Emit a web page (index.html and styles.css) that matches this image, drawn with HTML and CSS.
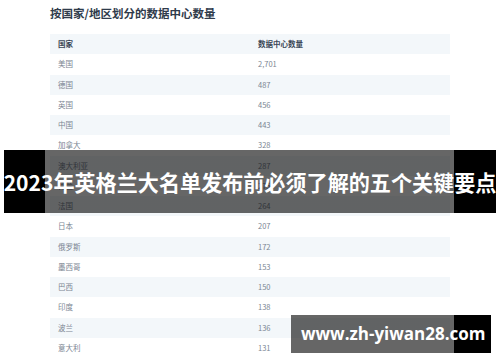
FILE: index.html
```html
<!DOCTYPE html>
<html lang="zh-CN">
<head>
<meta charset="utf-8">
<title>按国家/地区划分的数据中心数量</title>
<link rel="stylesheet" href="styles.css">
</head>
<body>
<main class="page">
  <h1 class="title">按国家/地区划分的数据中心数量</h1>
  <table class="dc-table">
    <thead>
      <tr><th>国家</th><th>数据中心数量</th></tr>
    </thead>
    <tbody>
      <tr><td>美国</td><td>2,701</td></tr>
      <tr><td>德国</td><td>487</td></tr>
      <tr><td>英国</td><td>456</td></tr>
      <tr><td>中国</td><td>443</td></tr>
      <tr><td>加拿大</td><td>328</td></tr>
      <tr><td>澳大利亚</td><td>287</td></tr>
      <tr><td>荷兰</td><td>275</td></tr>
      <tr><td>法国</td><td>264</td></tr>
      <tr><td>日本</td><td>207</td></tr>
      <tr><td>俄罗斯</td><td>172</td></tr>
      <tr><td>墨西哥</td><td>153</td></tr>
      <tr><td>巴西</td><td>150</td></tr>
      <tr><td>印度</td><td>138</td></tr>
      <tr><td>波兰</td><td>136</td></tr>
      <tr><td>意大利</td><td>131</td></tr>
    </tbody>
  </table>
</main>
<div class="banner"><span class="banner-text">2023年英格兰大名单发布前必须了解的五个关键要点</span></div>
<div class="watermark">www.zh-yiwan28.com</div>
</body>
</html>
```
FILE: styles.css
```css
html, body {
  margin: 0;
  padding: 0;
  background: #ffffff;
}
body {
  width: 500px;
  height: 362px;
  overflow: hidden;
  position: relative;
  font-family: "Noto Sans CJK SC", "Noto Sans", sans-serif;
}
.page {
  padding: 5px 0 0 50px;
}
.title {
  margin: 0;
  font-size: 11.5px;
  line-height: 16px;
  font-weight: 700;
  color: #2f3b4b;
}
.dc-table {
  margin-top: 13px;
  width: 400px;
  border-collapse: collapse;
  table-layout: fixed;
}
.dc-table th,
.dc-table td {
  height: 20.25px;
  padding: 0 8px;
  text-align: left;
  font-size: 7.5px;
  line-height: 10px;
  box-sizing: border-box;
}
.dc-table th {
  font-weight: 600;
  color: #3a4656;
}
.dc-table td {
  color: #7b8592;
  font-weight: 400;
}
.dc-table thead tr,
.dc-table tbody tr:nth-child(even) {
  background: #f3f7fa;
}
.banner {
  position: absolute;
  top: 150px;
  left: 4px;
  width: 492px;
  height: 63px;
  background: linear-gradient(to right, #000 0, #000 41px, rgba(0,0,0,0.6) 41px, rgba(0,0,0,0.6) 450px, #000 450px, #000 100%);
  display: flex;
  align-items: center;
  justify-content: center;
}
.banner-text {
  white-space: nowrap;
  color: #ffffff;
  font-family: "Noto Sans CJK SC", sans-serif;
  font-weight: 700;
  font-size: 21.1px;
  line-height: 26px;
}
.watermark {
  position: absolute;
  top: 315px;
  left: 291px;
  width: 200px;
  height: 38px;
  box-sizing: border-box;
  padding-left: 10px;
  background: linear-gradient(to right, rgba(0,0,0,0.6) 0, rgba(0,0,0,0.6) 163px, #000 163px, #000 100%);
  color: #ffffff;
  font-family: "Open Sans", sans-serif;
  font-weight: 700;
  font-size: 17px;
  line-height: 38px;
  white-space: nowrap;
}
```
